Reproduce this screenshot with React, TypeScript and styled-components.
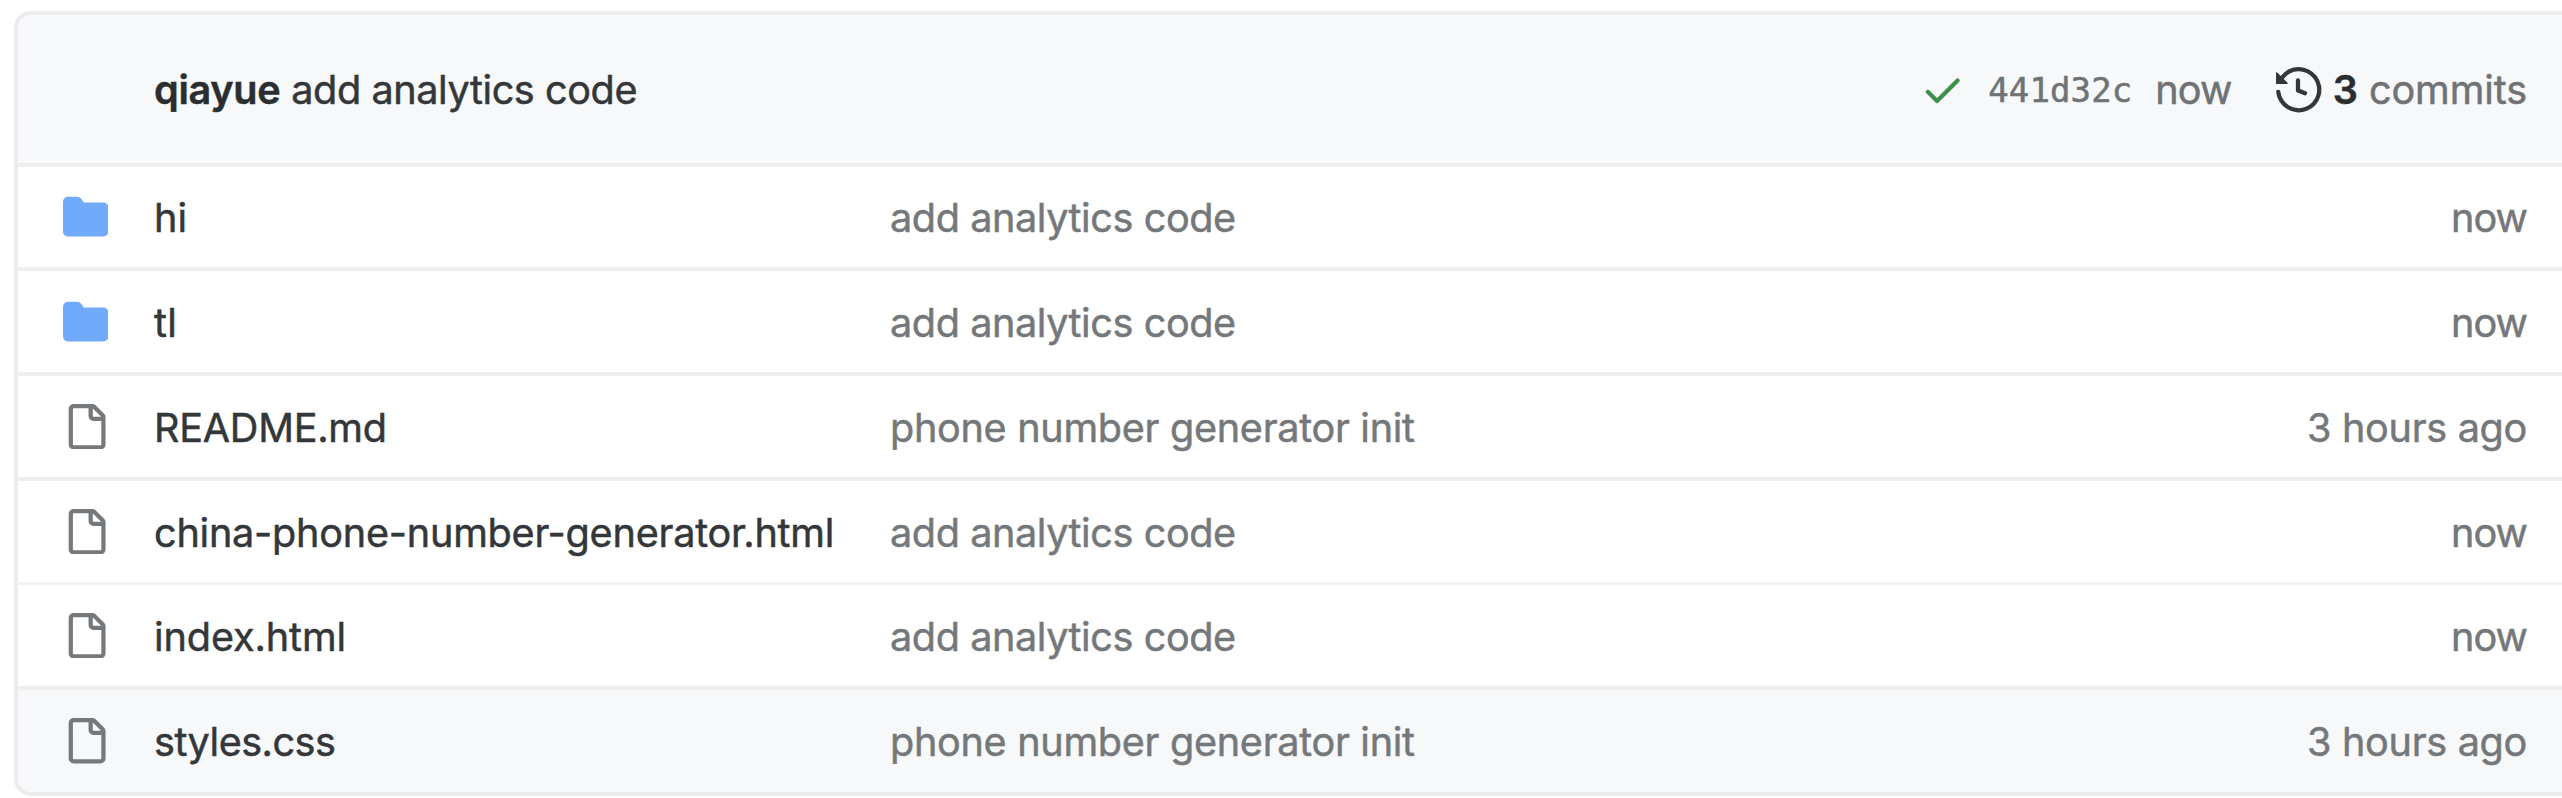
import React from "react";
import styled, { createGlobalStyle } from "styled-components";

const GlobalStyle = createGlobalStyle`
  html, body { margin: 0; background: #fff; overflow: hidden; }
  *, *::before, *::after { box-sizing: border-box; }
`;

const Page = styled.main`
  height: 798px;
  padding: 11px 0 2px 14px;
  overflow: hidden;
  font-family: Inter, "Liberation Sans", sans-serif;
  font-size: 39.6px;
  line-height: 60px;
  color: #34373a;
  -webkit-text-stroke: 0.5px currentColor;
`;

const FileBox = styled.section`
  height: 785px;
  border: 4px solid #ececee;
  border-right: 0;
  border-radius: 17px 0 0 17px;
  overflow: hidden;
  background: #fff;
`;

const CommitBar = styled.header`
  display: flex;
  align-items: center;
  justify-content: space-between;
  height: 148px;
  padding: 2px 35px 0 136px;
  background: #f6f8fa;
`;

const CommitSummary = styled.div`
  display: flex;
  align-items: center;
`;

const CommitMeta = styled.div`
  display: flex;
  align-items: center;
  color: #6f7376;
`;

const Label = styled.span<{ $tracking?: number }>`
  white-space: pre;
  letter-spacing: ${({ $tracking = 0 }) => $tracking}px;
`;

const Author = styled(Label)`
  font-weight: 600;
  color: #2b2e31;
  margin-right: 11px;
`;

const Sha = styled(Label)`
  font-family: "DejaVu Sans Mono", monospace;
  font-size: 34px;
  margin: 0 23px 0 23px;
`;

const Count = styled(Label)`
  font-weight: 600;
  color: #2b2e31;
  margin: 0 11px 0 11px;
`;

const Row = styled.div<{ $height: number; $thin?: boolean; $active?: boolean }>`
  display: grid;
  grid-template-columns: 91px 736px 1fr auto;
  align-items: center;
  height: ${({ $height }) => $height}px;
  padding: 0 35px 0 45px;
  border-top: ${({ $thin }) => ($thin ? "3px solid #f2f2f3" : "4px solid #efeff0")};
  background: ${({ $active }) => ($active ? "#f6f8fa" : "#fff")};
`;

const Cell = styled.div<{ $muted?: boolean }>`
  padding-top: 2px;
  color: ${({ $muted }) => ($muted ? "#75787b" : "#34373a")};
`;

const Icon = styled.svg<{ $color: string }>`
  display: block;
  flex: none;
  width: 45.4px;
  height: 45.4px;
  fill: ${({ $color }) => $color};
`;

const HistoryIcon = styled(Icon)`
  margin-left: 45px;
`;

const paths = {
  folder:
    "M1.75 1A1.75 1.75 0 0 0 0 2.75v10.5C0 14.216.784 15 1.75 15h12.5A1.75 1.75 0 0 0 16 13.25v-8.5A1.75 1.75 0 0 0 14.25 3H7.5a.25.25 0 0 1-.2-.1l-.9-1.2C6.07 1.26 5.55 1 5 1H1.75Z",
  file: "M2 1.75C2 .784 2.784 0 3.75 0h6.586c.464 0 .909.184 1.237.513l2.914 2.914c.329.328.513.773.513 1.237v9.586A1.75 1.75 0 0 1 13.25 16h-9.5A1.75 1.75 0 0 1 2 14.25Zm1.75-.25a.25.25 0 0 0-.25.25v12.5c0 .138.112.25.25.25h9.5a.25.25 0 0 0 .25-.25V6h-2.75A1.75 1.75 0 0 1 9 4.25V1.5Zm6.75.062V4.25c0 .138.112.25.25.25h2.688l-.011-.013-2.914-2.914-.013-.011Z",
  check:
    "M13.78 4.22a.75.75 0 0 1 0 1.06l-7.25 7.25a.75.75 0 0 1-1.06 0L2.22 9.28a.751.751 0 0 1 .018-1.042.751.751 0 0 1 1.042-.018L6 10.94l6.72-6.72a.75.75 0 0 1 1.06 0Z",
  history:
    "M1.643 3.143.427 1.927A.25.25 0 0 0 0 2.104V5.75c0 .138.112.25.25.25h3.646a.25.25 0 0 0 .177-.427L2.715 4.215a6.5 6.5 0 1 1-1.18 4.458.75.75 0 1 0-1.493.154 8.001 8.001 0 1 0 1.6-5.684ZM7.75 4a.75.75 0 0 1 .75.75v2.992l2.028.812a.75.75 0 0 1-.557 1.392l-2.5-1A.751.751 0 0 1 7 8.25v-3.5A.75.75 0 0 1 7.75 4Z",
};

type Entry = {
  kind: "folder" | "file";
  name: string;
  tracking: number;
  message: string;
  age: string;
  height: number;
  thin?: boolean;
  active?: boolean;
};

const analytics = "add analytics code";
const init = "phone number generator init";

const entries: Entry[] = [
  { kind: "folder", name: "hi", tracking: 0, message: analytics, age: "now", height: 104 },
  { kind: "folder", name: "tl", tracking: 0.4, message: analytics, age: "now", height: 105 },
  { kind: "file", name: "README.md", tracking: -0.25, message: init, age: "3 hours ago", height: 105 },
  { kind: "file", name: "china-phone-number-generator.html", tracking: -0.22, message: analytics, age: "now", height: 105 },
  { kind: "file", name: "index.html", tracking: -0.1, message: analytics, age: "now", height: 104, thin: true },
  { kind: "file", name: "styles.css", tracking: -0.5, message: init, age: "3 hours ago", height: 106, active: true },
];

export default function App() {
  return (
    <>
      <GlobalStyle />
      <Page>
        <FileBox>
          <CommitBar>
            <CommitSummary>
              <Author $tracking={-0.3}>qiayue</Author>
              <Label $tracking={-0.4}>{analytics}</Label>
            </CommitSummary>
            <CommitMeta>
              <Icon $color="#3f8f4b" viewBox="0 0 16 16">
                <path d={paths.check} />
              </Icon>
              <Sha $tracking={0.1}>441d32c</Sha>
              <Label $tracking={-0.9}>now</Label>
              <HistoryIcon $color="#34373a" viewBox="0 0 16 16">
                <path d={paths.history} />
              </HistoryIcon>
              <Count>3</Count>
              <Label $tracking={-0.1}>commits</Label>
            </CommitMeta>
          </CommitBar>
          {entries.map((e) => (
            <Row key={e.name} $height={e.height} $thin={e.thin} $active={e.active}>
              <Icon $color={e.kind === "folder" ? "#71a9fb" : "#75797c"} viewBox="0 0 16 16">
                <path d={paths[e.kind]} />
              </Icon>
              <Cell>
                <Label $tracking={e.tracking}>{e.name}</Label>
              </Cell>
              <Cell $muted>
                <Label $tracking={e.message === init ? -0.29 : -0.41}>{e.message}</Label>
              </Cell>
              <Cell $muted>
                <Label $tracking={e.age === "now" ? -0.9 : -0.3}>{e.age}</Label>
              </Cell>
            </Row>
          ))}
        </FileBox>
      </Page>
    </>
  );
}
